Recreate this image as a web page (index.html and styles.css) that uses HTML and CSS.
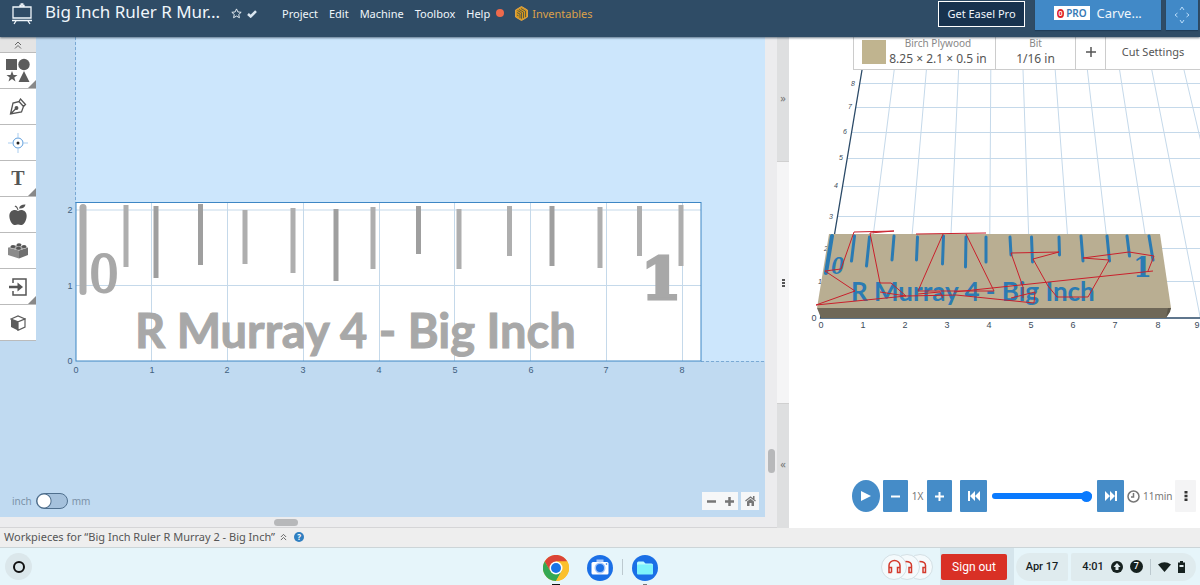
FILE: index.html
```
<!DOCTYPE html>
<html lang="en">
  <head>
    <meta charset="UTF-8" />
    <meta name="viewport" content="width=device-width, initial-scale=1.0" />
    <title>Big Inch Ruler R Murray 2 - Easel</title>
    <link rel="stylesheet" href="styles.css">
  </head>
  <body>
    <header class="topbar">
      <svg class="logo" width="20" height="22" viewBox="0 0 20 22" fill="none" stroke="currentColor" stroke-width="1.3">
        <path d="M1 4h18v11H1zM8 4V2.500h1.200V1h1.600v1.500H12V4M0 17.500h20M4 18l-2 3M16 18l2 3" />
      </svg>
      <h1>Big Inch Ruler R Mur...</h1>
      <svg class="star" width="11" height="11" viewBox="0 0 12 12" fill="none" stroke="currentColor" stroke-width="1">
        <path d="M6 1l1.500 3.300 3.600.4-2.700 2.400.8 3.500L6 8.800l-3.200 1.800.8-3.500L.9 4.700l3.600-.4z" />
      </svg>
      <svg class="saved" width="10" height="8" viewBox="0 0 10 8" fill="none" stroke="currentColor" stroke-width="2.500">
        <path d="M1 4l2.700 2.500L9 1.200" />
      </svg>
      <nav class="menu">
        <a href="#">Project</a>
        <a href="#">Edit</a>
        <a href="#">Machine</a>
        <a href="#">Toolbox</a>
        <a href="#">Help <span class="dot"></span></a>
        <a href="#" class="shop">
          <svg width="13" height="15" viewBox="0 0 13 15" fill="none" stroke="currentColor" stroke-width="1">
            <path fill="#d99a1c" d="M6.500.5l6 3.500v7l-6 3.500-6-3.500V4z" />
            <path stroke="#3c4a4c" stroke-width=".8" d="M2.500 4.500l4 2.300v6M2 6.500l3 1.700v4M2 9l1.500.8M4 3.500l4.500 2.600v6M6 2.500l4.500 2.600v6" />
          </svg>
          Inventables
        </a>
      </nav>
      <button type="button" class="get-pro">Get Easel Pro</button>
      <button type="button" class="carve"><span class="pro-tag"><i>0</i>PRO</span>Carve...</button>
      <button type="button" class="jog" aria-label="Jog machine">
        <svg width="16" height="18" viewBox="0 0 16 18" fill="none" stroke="currentColor" stroke-width="1">
          <path d="M6 4l2-3 2 3M6 14l2 3 2-3M3.500 7L1 9l2.500 2M12.500 7L15 9l-2.500 2" />
        </svg>
      </button>
    </header>

    <main class="workspace">
      <section class="design">
        <div class="canvas">
          <svg class="drawing" viewBox="0 37 765 480" preserveAspectRatio="xMinYMin slice">
            <rect x="76" y="37" width="900" height="324" fill="#cce6fc" />
            <path class="guide" d="M75.500 37V203M701 361.500H900" />
            <rect x="76" y="202" width="625" height="159" fill="#fff" />
            <path class="grid" d="M151.500 203V361M227.500 203V361M303.500 203V361M379.500 203V361M454.500 203V361M530.500 203V361M606.500 203V361M682.500 203V361M76 210H701M76 285.500H701" />
            <g class="ticks">
              <path class="wide" d="M83 207.500V291.500" />
              <path d="M126 205V267M245 210V264M639.500 206V256M681 205V266" />
              <path class="dark" d="M156 206V278M200.500 204V265M336 209V281M418.500 206V254M552 206V266" />
              <path d="M293 208V273M373 207V269M459 209V269M509.500 206V256M600 207V268" />
            </g>
            <g class="carving">
              <text x="90" y="292" class="zero">0</text>
              <text x="641" y="299" class="one">1</text>
              <text x="135" y="348" class="name">R Murray 4 - Big Inch</text>
            </g>
            <rect x="76" y="202.500" width="625" height="158.500" fill="none" stroke="#3d86c4" />
            <g class="ruler">
              <text x="76" y="373">0</text><text x="152" y="373">1</text><text x="227" y="373">2</text>
              <text x="303" y="373">3</text><text x="379" y="373">4</text><text x="455" y="373">5</text>
              <text x="531" y="373">6</text><text x="606" y="373">7</text><text x="682" y="373">8</text>
              <text x="70" y="364">0</text><text x="70" y="289">1</text><text x="70" y="213">2</text>
            </g>
          </svg>

          <div class="tools">
            <button type="button" class="collapse" aria-label="Collapse tools">
              <svg width="8" height="8" viewBox="0 0 8 8" fill="none" stroke="#666"><path d="M1 4l3-3 3 3M1 7.500l3-3 3 3" /></svg>
            </button>
            <button type="button" class="more" aria-label="Shapes">
              <svg width="26" height="26" viewBox="0 0 26 26" fill="#5c5c5c">
                <path d="M1 1h11v11H1zM7 13l1.500 4h4l-3.200 2.400 1.200 4L7 21l-3.500 2.400 1.200-4L1.500 17h4zM19 13l5.500 11h-11z" /><circle cx="19" cy="6.500" r="5.700" />
              </svg>
            </button>
            <button type="button" aria-label="Pen">
              <svg width="18" height="18" viewBox="0 0 18 18" fill="none" stroke="#555" stroke-width="1.300">
                <path d="M1.500 16L4 5l6-1.500 4.500 5L12.500 14zM10 3.500L11.500 1l5 5.500-2 2M1.500 16l5.500-5.500" /><circle cx="7.500" cy="10" r="1.300" fill="#555" />
              </svg>
            </button>
            <button type="button" aria-label="Drill point">
              <svg width="20" height="20" viewBox="0 0 20 20" fill="none" stroke="#5d9ddc">
                <circle cx="10" cy="10" r="5" /><path stroke="#a9cdf0" d="M10 0v5M10 15v5M0 10h5M15 10h5" /><circle cx="10" cy="10" r="1.500" fill="#222" stroke="none" />
              </svg>
            </button>
            <button type="button" class="more letter">T</button>
            <button type="button" aria-label="Apps">
              <svg width="18" height="22" viewBox="0 0 18 22" fill="#555">
                <path d="M9 7c2-1.500 5-1.500 7 .5 3 3 1.500 9-1 12-2 2.300-4 1.500-6 1-2 .5-4 1.300-6-1-2.500-3-4-9-1-12 2-2 5-2 7-.5zM8.500 6C8 4 7 3 5.500 2.500l1.200-1C8 2.200 8.800 3.500 9.500 6zM10 4.500C10.500 1.500 13 .3 16.500.5 16 3.500 13.500 5 10 4.500z" />
              </svg>
            </button>
            <button type="button" aria-label="Bricks">
              <svg width="20" height="16" viewBox="0 0 20 16">
                <path fill="#8b8b8b" d="M0 4.500l11 3V15.500L0 12z" /><path fill="#6f6f6f" d="M11 7.500l9-3V12l-9 3.500z" /><path fill="#a9a9a9" d="M0 4.500L9 2l11 2.500-9 3z" />
                <g fill="#555"><ellipse cx="5" cy="3.500" rx="2.500" ry="1.500" /><ellipse cx="11" cy="1.700" rx="2.500" ry="1.500" /><ellipse cx="10.500" cy="5.300" rx="2.500" ry="1.500" /><ellipse cx="16" cy="3.500" rx="2.500" ry="1.500" /></g>
              </svg>
            </button>
            <button type="button" class="more" aria-label="Import">
              <svg width="18" height="18" viewBox="0 0 18 18" fill="none" stroke="#555" stroke-width="1.500">
                <path d="M4 5V1h13v16H4v-4" /><path stroke-width="2.500" d="M0 9h10" /><path fill="#555" stroke="none" d="M8.500 4.500L14 9l-5.500 4.500z" />
              </svg>
            </button>
            <button type="button" aria-label="3D">
              <svg width="16" height="16" viewBox="0 0 16 16">
                <path fill="#5c5c5c" d="M1 4l7 2.800V15.500L1 12z" /><path fill="#fff" stroke="#5c5c5c" stroke-width="1.200" d="M8 6.800L15 4v8l-7 3.300zM1 4l7-3 7 3-7 2.800z" />
              </svg>
            </button>
          </div>

          <div class="units">
            <span>inch</span>
            <input type="checkbox" id="units" aria-label="Use millimetres" />
            <label for="units">mm</label>
          </div>

          <div class="zoom">
            <div class="zoom-group">
              <button type="button" aria-label="Zoom out"><svg width="9" height="9" viewBox="0 0 9 9"><path stroke="#777" stroke-width="2.500" d="M0 4.500h9" /></svg></button>
              <button type="button" aria-label="Zoom in"><svg width="9" height="9" viewBox="0 0 9 9"><path stroke="#777" stroke-width="2.500" d="M0 4.500h9M4.500 0v9" /></svg></button>
            </div>
            <button type="button" class="home" aria-label="Fit to view">
              <svg width="11" height="10" viewBox="0 0 11 10"><path fill="none" stroke="#777" stroke-width="1.300" d="M.5 5l5-4 5 4" /><path fill="#777" d="M8 0h1.500v3H8zM2 5.500L5.500 2.700 9 5.500V10H6.500V7h-2v3H2z" /></svg>
            </button>
          </div>
        </div>
        <div class="vscroll"><span></span></div>
        <div class="hscroll"><span></span></div>
      </section>

      <div class="splitter">
        <button type="button" aria-label="Expand design">»</button>
        <div class="grip"><span></span></div>
        <button type="button" aria-label="Expand preview">«</button>
      </div>

      <section class="preview">
        <svg class="scene" viewBox="789 37 411 491" preserveAspectRatio="xMinYMin slice">
          <path class="grid" d="M894.200 70L862.700 318M926.400 70L904.900 318M958.600 70L947.100 318M990.800 70L989.300 318M1023 70L1031.500 318M1055.200 70L1073.700 318M1087.400 70L1115.900 318M1119.600 70L1158.100 318M1151.800 70L1200.300 318M1184 70L1242.500 318" />
          <path class="grid" d="M859 83.500H1200M855 107.500H1200M851 132.500H1200M847 158.500H1200M842 186.500H1200M837 216.500H1200M832 248.500H1200M827 281.500H1200" />
          <path stroke="#2b4a68" stroke-width="1.300" d="M862 70L820.500 318H1200" fill="none" />
          <g class="axis">
            <text x="821" y="328">0</text><text x="863" y="328">1</text><text x="905" y="328">2</text>
            <text x="947" y="328">3</text><text x="989" y="328">4</text><text x="1031" y="328">5</text>
            <text x="1073" y="328">6</text><text x="1115" y="328">7</text><text x="1158" y="328">8</text>
            <text x="1197" y="328">9</text><text x="814" y="321">0</text>
          </g>
          <g class="axis far">
            <text x="820" y="284">1</text><text x="826" y="251">2</text><text x="831" y="219">3</text>
            <text x="836" y="188">4</text><text x="841" y="160">5</text><text x="845" y="134">6</text>
            <text x="850" y="109">7</text><text x="853" y="86">8</text>
          </g>
          <path fill="#b9ae92" d="M829 234H1160L1171 308H817z" />
          <path fill="#6f6858" d="M817 308H1171L1166 318H821z" />
          <path fill="#5b5548" d="M1171 308L1170 312L1166 318L1168 308z" />
          <g class="cut">
            <path stroke-width="4" d="M832 236L826 273" />
            <path d="M854.500 236L851.500 261M869.500 237L866.500 266M894 236L892 260M917.500 237L916.500 260M943.500 236L942.500 264M966 237L965.500 267M986 237V262M1010 237L1011 255M1031.500 237L1032.500 262M1059 237L1059.500 255M1081 236L1083 261M1107 236L1109.500 261M1127 236L1129.500 256M1149 236L1153 260" />
            <text x="831" y="274" class="cut-zero">0</text>
            <text x="1133" y="277" class="cut-one">1</text>
            <text x="851" y="301" class="cut-name">R Murray 4 - Big Inch</text>
          </g>
          <path class="toolpath" d="M816 305L855 291L825 271L841 269L854 232L894 231M870 233L880 283H891L906 296L880 292M870 233L894 231M816 305L906 296L956 295L1034 303L1035 292L1011 298M916 234L986 233M943 234L918 291L994 291L966 234M918 294L940 292L943 298M954 292L1011 286L1153 271M1023 298V287L1011 253L1059 252L1033 259L1048 286L1057 297H1088L1109 260L1083 258L1129 252L1154 256L1148 271" />
        </svg>

        <div class="material-bar">
          <button type="button" class="material">
            <span class="swatch"></span>
            <span class="stack"><small>Birch Plywood</small><b>8.25 × 2.1 × 0.5 in</b></span>
          </button>
          <button type="button" class="bit"><span class="stack"><small>Bit</small><b>1/16 in</b></span></button>
          <button type="button" class="add" aria-label="Add bit">
            <svg width="10" height="10" viewBox="0 0 10 10" stroke="#555" stroke-width="1.500"><path d="M0 5h10M5 0v10" /></svg>
          </button>
          <button type="button" class="settings">Cut Settings</button>
        </div>

        <div class="player">
          <button type="button" class="play" aria-label="Play"><svg width="10" height="12" viewBox="0 0 10 12"><path fill="#fff" d="M0 1l10 5-10 5z" /></svg></button>
          <button type="button" aria-label="Slower"><svg width="9" height="9" viewBox="0 0 9 9" stroke="#fff" stroke-width="2"><path d="M0 4.500h9" /></svg></button>
          <output>1X</output>
          <button type="button" aria-label="Faster"><svg width="9" height="9" viewBox="0 0 9 9" stroke="#fff" stroke-width="2"><path d="M0 4.500h9M4.500 0v9" /></svg></button>
          <button type="button" class="skip first" aria-label="To start"><svg width="12" height="10" viewBox="0 0 12 10" fill="#fff"><path d="M0 0h2v10H0zM7 0v10L2 5zM12 0v10L7 5z" /></svg></button>
          <input type="range" min="0" max="100" value="100" aria-label="Progress" />
          <button type="button" class="skip" aria-label="To end"><svg width="12" height="10" viewBox="0 0 12 10" fill="#fff"><path d="M10 0h2v10h-2zM0 0v10l5-5zM5 0v10l5-5z" /></svg></button>
          <span class="time">
            <svg width="13" height="13" viewBox="0 0 13 13" fill="none" stroke="#777" stroke-width="1.500"><circle cx="6.500" cy="6.500" r="5.500" /><path d="M6.500 3v4H4" /></svg>
            11min
          </span>
          <button type="button" class="options" aria-label="Options"><svg width="4" height="12" viewBox="0 0 4 12" fill="#333"><path d="M.5 1h3v2.500h-3zM.5 4.800h3v2.500h-3zM.5 8.600h3v2.500h-3z" /></svg></button>
        </div>
      </section>
    </main>

    <div class="workpieces">
      <span>Workpieces for “Big Inch Ruler R Murray 2 - Big Inch”</span>
      <svg width="7" height="8" viewBox="0 0 8 8" fill="none" stroke="#555"><path d="M1 4l3-3 3 3M1 7.500l3-3 3 3" /></svg>
      <a href="#" class="help">?</a>
    </div>

    <footer class="shelf">
      <button type="button" class="launcher" aria-label="Launcher"><span></span></button>
      <div class="apps">
        <a href="#" class="app running" aria-label="Chrome">
          <svg width="26" height="26" viewBox="0 0 26 26">
            <circle cx="13" cy="13" r="13" fill="#fbc02d" />
            <path fill="#db4437" d="M13 6.500h11.300A13 13 0 0 0 1.700 6.500l5.600 9.800z" />
            <path fill="#34a853" d="M1.700 6.500A13 13 0 0 0 13 26l5.600-9.700L13 13l-5.600 3.200z" />
            <path fill="#fbc02d" d="M24.300 6.500H13v6.500l5.600 3.200L13 26A13 13 0 0 0 24.300 6.500z" />
            <circle cx="13" cy="13" r="6.500" fill="#fff" /><circle cx="13" cy="13" r="5" fill="#1a73e8" />
          </svg>
        </a>
        <a href="#" class="app" aria-label="Camera">
          <svg width="26" height="26" viewBox="0 0 26 26">
            <circle cx="13" cy="13" r="13" fill="#1a6fe6" /><path fill="#a7c7fa" d="M9.500 4.500h7v3h-7z" />
            <rect x="4.500" y="7" width="17" height="12.500" rx="1.500" fill="#fff" /><circle cx="13" cy="13" r="5.500" fill="#a7c7fa" /><circle cx="13" cy="13" r="4" fill="#1a6fe6" /><circle cx="19.500" cy="9" r=".8" fill="#1a6fe6" />
          </svg>
        </a>
        <span class="rule"></span>
        <a href="#" class="app running idle" aria-label="Files">
          <svg width="26" height="26" viewBox="0 0 26 26">
            <circle cx="13" cy="13" r="13" fill="#1a6fe6" /><path fill="#b9fbff" d="M5 8a1.500 1.500 0 0 1 1.500-1.500h5l2 2h6A1.500 1.500 0 0 1 21 10v2H5z" /><rect x="5" y="9.500" width="16" height="10" rx="1" fill="#7df3fb" />
          </svg>
        </a>
      </div>
      <div class="status">
        <div class="headsets">
          <svg width="52" height="26" viewBox="0 0 52 26">
            <g fill="#f4fafc" stroke="#d3dfe4"><circle cx="39" cy="13" r="12.500" /><circle cx="26" cy="13" r="12.500" /><circle cx="13" cy="13" r="12.500" /></g>
            <g fill="none" stroke="#d33a2c" stroke-width="1.500">
              <path d="M10.500 18.500H8v-7a5.500 5 0 0 1 11 0v7h-2.500v-5H19M8 13.500h2.500v5M24.500 7.500c4 0 6 1.500 6 4v7H28v-5h2.500M38.500 7.500c4 0 6 1.500 6 4v7H42v-5h2.500" />
            </g>
          </svg>
        </div>
        <div class="session"><button type="button">Sign out</button></div>
        <button type="button" class="pill date">Apr 17</button>
        <button type="button" class="pill clock">
          <span>4:01</span>
          <svg width="12" height="12" viewBox="0 0 12 12"><circle cx="6" cy="6" r="6" fill="#16211f" /><path fill="#e0ebee" d="M6 2l3.500 4H7.500v3h-3V6h-2z" /></svg>
          <span class="badge">7</span>
          <span class="rule"></span>
          <svg width="13" height="10" viewBox="0 0 13 10"><path fill="#16211f" d="M0 2.500Q6.500-2 13 2.500L6.500 10z" /></svg>
          <svg width="7" height="12" viewBox="0 0 7 12"><path fill="#16211f" d="M2 0h3v1.500h2V12H0V1.500h2z" /><path fill="#e0ebee" d="M1.500 4h4v2h-4z" /></svg>
        </button>
      </div>
    </footer>
  </body>
</html>
```

FILE: styles.css
```
* {
  margin: 0;
  padding: 0;
  box-sizing: border-box;
}

body {
  display: flex;
  flex-direction: column;
  height: 100vh;
  overflow: hidden;
  font-family: "Noto Sans", "Open Sans", sans-serif;
  font-size: 11px;
  color: #555;
  background: #fff;
}

button {
  display: flex;
  align-items: center;
  justify-content: center;
  border: none;
  background: none;
  font: inherit;
  color: inherit;
  cursor: pointer;
}

a {
  color: inherit;
  text-decoration: none;
}

svg {
  display: block;
  flex-shrink: 0;
}

/* header */
.topbar {
  position: relative;
  z-index: 2;
  display: flex;
  align-items: flex-start;
  flex: 0 0 37px;
  padding-left: 12px;
  background: #2f4c66;
  color: #f0f6fb;
  box-shadow: 0 1px 2px rgba(20, 40, 60, 0.6);
}

.logo {
  margin: 3px 13px 0 0;
}

h1 {
  width: 186px;
  font-size: 17px;
  font-weight: 400;
  line-height: 24px;
  white-space: nowrap;
}

.star {
  margin-top: 8px;
}

.saved {
  margin: 10px 25px 0 5px;
  color: #dbe7f1;
}

.menu {
  display: flex;
  flex: 1;
  gap: 11px;
}

.menu a {
  display: flex;
  align-items: center;
  height: 26px;
}

.dot {
  width: 8px;
  height: 8px;
  margin-left: 6px;
  border-radius: 50%;
  background: #ee6a4c;
}

.menu .shop {
  gap: 4px;
  color: #dba14b;
}

.get-pro {
  height: 26px;
  margin: 1px 10px 0 0;
  padding-bottom: 2px;
  width: 87px;
  border: 1px solid #fff;
  background: #17324e;
}

.carve,
.jog {
  height: 30px;
  background: #4189c7;
  box-shadow: 0 1px 1px #1f3c58;
}

.carve {
  gap: 7px;
  width: 126px;
  margin-right: 5px;
  padding-bottom: 4px;
  font-size: 13px;
}

.jog {
  width: 32px;
  margin-right: 2px;
  color: #b8dcfa;
}

.pro-tag {
  display: flex;
  align-items: center;
  gap: 2px;
  height: 14px;
  padding: 0 3px;
  background: #fff;
  color: #3579b4;
  font-size: 10px;
  font-weight: 600;
}

.pro-tag i {
  width: 7px;
  height: 9px;
  border-radius: 50%;
  background: #e0242a;
  color: #fff;
  font-size: 7px;
  font-style: normal;
  line-height: 9px;
  text-align: center;
}

/* workspace */
.workspace {
  display: flex;
  flex: 1;
  min-height: 0;
}

.design {
  display: grid;
  flex: 1;
  grid-template-columns: 1fr 12px;
  grid-template-rows: 1fr 11px;
  min-width: 0;
  background: #ececee;
}

.canvas {
  position: relative;
  min-height: 0;
  overflow: hidden;
  background: #c0daf1;
}

.drawing,
.scene {
  position: absolute;
  width: 100%;
  height: 100%;
}

.grid {
  fill: none;
  stroke: #c5d9ea;
}

.guide {
  fill: none;
  stroke: #79a9d4;
  stroke-dasharray: 3 2;
}

.ticks {
  fill: none;
  stroke: #aeaeae;
  stroke-width: 5;
}

.ticks .dark {
  stroke: #9f9f9f;
}

.ticks .wide {
  stroke: #adadad;
  stroke-width: 7;
  stroke-linecap: round;
}

.carving {
  fill: #a8a8a8;
  stroke: #a8a8a8;
  stroke-width: 1;
  font-weight: 700;
}

.carving .zero {
  font-family: "Liberation Serif", serif;
  font-size: 56px;
  font-weight: 400;
  stroke-width: 2;
}

.carving .one {
  font-family: "DejaVu Serif", serif;
  font-size: 58px;
  stroke-width: 3;
}

.carving .name {
  font-family: Lato, sans-serif;
  font-size: 47px;
}

.ruler {
  fill: #3f6080;
  font-family: "Liberation Sans", sans-serif;
  font-size: 9px;
  text-anchor: middle;
}

.tools {
  position: absolute;
  top: 0;
  left: 0;
  width: 36px;
}

.tools button {
  position: relative;
  width: 36px;
  height: 36px;
  border-bottom: 1px solid #bbb;
  background: #fff;
}

.tools .collapse {
  height: 16px;
  background: #e4e4e4;
}

.tools .more::after {
  content: "";
  position: absolute;
  right: 0;
  bottom: 0;
  border: 4px solid;
  border-color: transparent #888 #888 transparent;
}

.tools .letter {
  font-family: "Liberation Serif", serif;
  font-size: 20px;
  font-weight: 700;
}

.units {
  position: absolute;
  bottom: 8px;
  left: 12px;
  display: flex;
  align-items: center;
  gap: 4px;
  color: #7b92a8;
  font-size: 10px;
  line-height: 16px;
}

.units input {
  appearance: none;
  width: 32px;
  height: 16px;
  border: 1px solid #4f6f8d;
  border-radius: 8px;
  background: radial-gradient(circle at 7px 7px, #fff 6px, #4f6f8d 7px, #a5c1dc 8px);
}

.zoom {
  position: absolute;
  right: 6px;
  bottom: 7px;
  display: flex;
  gap: 3px;
}

.zoom-group {
  display: flex;
}

.zoom button {
  width: 18px;
  height: 18px;
  background: #f6f7f8;
}

.vscroll {
  display: flex;
  align-items: flex-end;
  justify-content: center;
  padding-bottom: 44px;
}

.vscroll span {
  width: 7px;
  height: 24px;
  border-radius: 4px;
  background: #b7b8ba;
}

.hscroll {
  display: flex;
  grid-column: 1 / 3;
  align-items: center;
  padding-left: 274px;
  border-bottom: 1px solid #d5d5d7;
}

.hscroll span {
  width: 24px;
  height: 7px;
  border-radius: 4px;
  background: #b7b8ba;
}

.splitter {
  display: flex;
  flex: 0 0 12px;
  flex-direction: column;
  background: #dedfe0;
}

.splitter button {
  flex: 1;
  padding-bottom: 4px;
  color: #777;
}

.grip {
  display: flex;
  flex: 2;
  align-items: center;
  justify-content: center;
  border: solid #d0d0d0;
  border-width: 1px 0;
  background: #f5f5f6;
}

.grip span {
  width: 3px;
  height: 8px;
  background: repeating-linear-gradient(#555 0 2px, transparent 2px 3px);
}

/* 3D preview */
.preview {
  position: relative;
  display: flex;
  flex: 0 0 34.25%;
  flex-direction: column;
  align-items: flex-end;
  justify-content: space-between;
  overflow: hidden;
}

.axis {
  fill: #3c4b5a;
  font-family: "Liberation Sans", sans-serif;
  font-size: 9px;
  text-anchor: middle;
}

.far {
  font-size: 7px;
  font-style: italic;
}

.cut {
  fill: #2b7bb3;
  stroke: #2b7bb3;
  stroke-width: 3;
  stroke-linecap: round;
}

.cut text {
  stroke: none;
  font-weight: 700;
}

.cut .cut-zero {
  font-family: "Liberation Serif", serif;
  font-size: 26px;
  font-style: italic;
}

.cut .cut-one {
  font-family: "DejaVu Serif", serif;
  font-size: 27px;
}

.cut .cut-name {
  font-family: Lato, sans-serif;
  font-size: 26px;
}

.toolpath {
  fill: none;
  stroke: #c9202c;
}

.material-bar,
.player {
  position: relative;
  display: flex;
}

.material-bar {
  width: 347px;
  height: 33px;
  border: 1px solid #ccc;
  border-width: 0 0 1px 1px;
  background: #fff;
}

.material-bar button {
  padding-bottom: 3px;
}

.material-bar button + button {
  border-left: 1px solid #ccc;
}

.material {
  gap: 3px;
  width: 141px;
}

.bit {
  width: 80px;
}

.add {
  width: 30px;
}

.settings {
  flex: 1;
}

.swatch {
  width: 24px;
  height: 24px;
  background: #c0b48f;
}

.stack {
  display: flex;
  flex-direction: column;
}

.stack small {
  color: #888;
  font-size: 10px;
  line-height: 13px;
}

.stack b {
  font-size: 12px;
  font-weight: 400;
  line-height: 17px;
}

.player {
  align-items: center;
  gap: 3px;
  padding: 0 4px 16px 0;
}

.player button {
  width: 25px;
  height: 32px;
  border-radius: 1px;
  background: #458cc8;
}

.player .play {
  width: 28px;
  border-radius: 50%;
}

.player .skip {
  width: 27px;
}

.player .first {
  margin-left: 5px;
}

.player output {
  width: 13px;
  color: #777;
  font-size: 10px;
  text-align: center;
}

.player input {
  appearance: none;
  width: 100px;
  height: 6px;
  margin: 0 2px;
  border-radius: 3px;
  background: #0a7afe;
}

.player input::-webkit-slider-thumb {
  appearance: none;
  width: 11px;
  height: 11px;
  border-radius: 50%;
  background: #0a7afe;
}

.time {
  display: flex;
  align-items: center;
  gap: 3px;
  width: 45px;
  color: #777;
  font-size: 10px;
}

.player .options {
  width: 21px;
  background: #f4f4f5;
}

/* workpieces strip */
.workpieces {
  display: flex;
  flex: 0 0 20px;
  align-items: center;
  gap: 5px;
  padding: 0 0 2px 4px;
  border-bottom: 1px solid #ccd5d8;
  background: #eee;
}

.help {
  width: 10px;
  height: 10px;
  margin-left: 2px;
  border-radius: 50%;
  background: #2f7fc1;
  color: #fff;
  font-size: 8px;
  font-weight: 700;
  line-height: 10px;
  text-align: center;
}

/* system shelf */
.shelf {
  display: grid;
  flex: 0 0 37px;
  grid-template-columns: 1fr auto 1fr;
  align-items: center;
  padding: 0 4px 0 5px;
  background: #e6f5fa;
  color: #16211f;
  font-family: Roboto, sans-serif;
  font-size: 12px;
  font-weight: 500;
}

.launcher {
  width: 27px;
  height: 27px;
  border-radius: 50%;
  background: #dbe7eb;
}

.launcher span {
  width: 12px;
  height: 12px;
  border: 2px solid #111;
  border-radius: 50%;
}

.apps {
  display: flex;
  align-items: center;
  gap: 9px;
}

.app {
  position: relative;
  margin-top: 2px;
}

.app:first-child {
  margin-right: 9px;
}

.running::after {
  content: "";
  position: absolute;
  bottom: -5px;
  left: 9px;
  width: 8px;
  height: 2px;
  background: #111;
}

.idle::after {
  left: 11px;
  width: 4px;
  background: #777;
}

.rule {
  width: 1px;
  height: 16px;
  background: #bcc9cf;
}

.status {
  display: flex;
  align-items: center;
  justify-content: flex-end;
}

.headsets {
  margin-right: 7px;
}

.session {
  display: flex;
  align-items: center;
  height: 37px;
  margin-right: 2px;
  padding: 0 7px 0 1px;
  background: #d5e5ec;
}

.session button {
  width: 66px;
  height: 26px;
  border-radius: 2px;
  background: #d93025;
  color: #fff;
  font-weight: 400;
}

.pill {
  height: 28px;
  background: #dfebee;
  font-size: 11px;
}

.date {
  width: 52px;
  margin-right: 3px;
  border-radius: 14px 2px 2px 14px;
}

.clock {
  gap: 7px;
  width: 125px;
  border-radius: 2px 14px 14px 2px;
}

.badge {
  width: 13px;
  height: 13px;
  border-radius: 50%;
  background: #16211f;
  color: #fff;
  font-size: 9px;
  line-height: 13px;
}
```
